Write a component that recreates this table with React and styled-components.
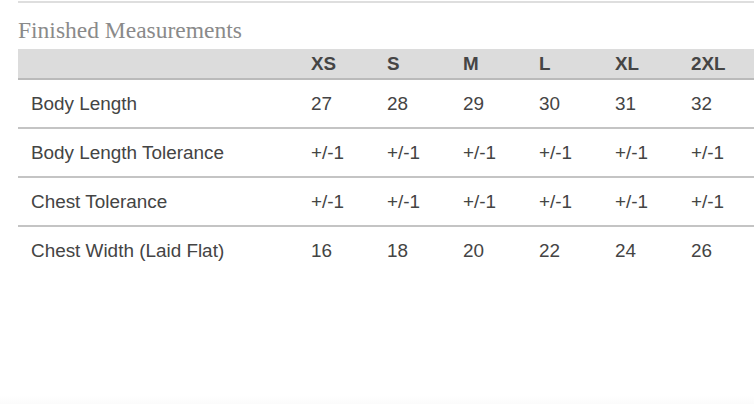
import React from "react";
import styled, { createGlobalStyle } from "styled-components";

const GlobalStyle = createGlobalStyle`
  body {
    margin: 0;
    background: #fff;
    font-family: "Liberation Sans", Arial, sans-serif;
  }
`;

const Page = styled.div`
  width: 754px;
  height: 404px;
  box-sizing: border-box;
  padding: 1px 0 0 18px;
  background: linear-gradient(to bottom, #fff 396px, #fbfbfb 404px);
  overflow: hidden;
`;

const Rule = styled.div`
  height: 2px;
  background: #dedede;
`;

const Title = styled.h2`
  margin: 14px 0 5px;
  font-family: "Liberation Serif", "Times New Roman", serif;
  font-weight: normal;
  font-size: 23.5px;
  line-height: 27px;
  color: #8a8a8a;
`;

const Table = styled.table`
  width: 736px;
  border-collapse: collapse;
  table-layout: fixed;
  color: #444;
  font-size: 18.9px;
`;

const HeadRow = styled.tr`
  background: #dcdcdc;
  border-bottom: 2px solid #bababa;
`;

const Th = styled.th`
  height: 29px;
  padding: 0 0 0 13px;
  text-align: left;
  font-weight: bold;
  font-size: 18.8px;
  color: #454545;
  width: ${(p) => (p.$first ? "267px" : "63px")};
`;

const Row = styled.tr`
  border-bottom: ${(p) => (p.$last ? "none" : "2px solid #c4c4c4")};
`;

const Td = styled.td`
  height: 46px;
  padding: 1px 0 0 13px;
  vertical-align: middle;
  white-space: nowrap;
`;

const sizes = ["XS", "S", "M", "L", "XL", "2XL"];

const rows = [
  { label: "Body Length", values: ["27", "28", "29", "30", "31", "32"] },
  { label: "Body Length Tolerance", values: Array(6).fill("+/-1") },
  { label: "Chest Tolerance", values: Array(6).fill("+/-1") },
  { label: "Chest Width (Laid Flat)", values: ["16", "18", "20", "22", "24", "26"] },
];

export default function App() {
  return (
    <>
      <GlobalStyle />
      <Page>
        <Rule />
        <Title>Finished Measurements</Title>
        <Table>
          <thead>
            <HeadRow>
              <Th $first />
              {sizes.map((s) => (
                <Th key={s}>{s}</Th>
              ))}
            </HeadRow>
          </thead>
          <tbody>
            {rows.map((r, i) => (
              <Row key={r.label} $last={i === rows.length - 1}>
                <Td>{r.label}</Td>
                {r.values.map((v, j) => (
                  <Td key={j}>{v}</Td>
                ))}
              </Row>
            ))}
          </tbody>
        </Table>
      </Page>
    </>
  );
}
